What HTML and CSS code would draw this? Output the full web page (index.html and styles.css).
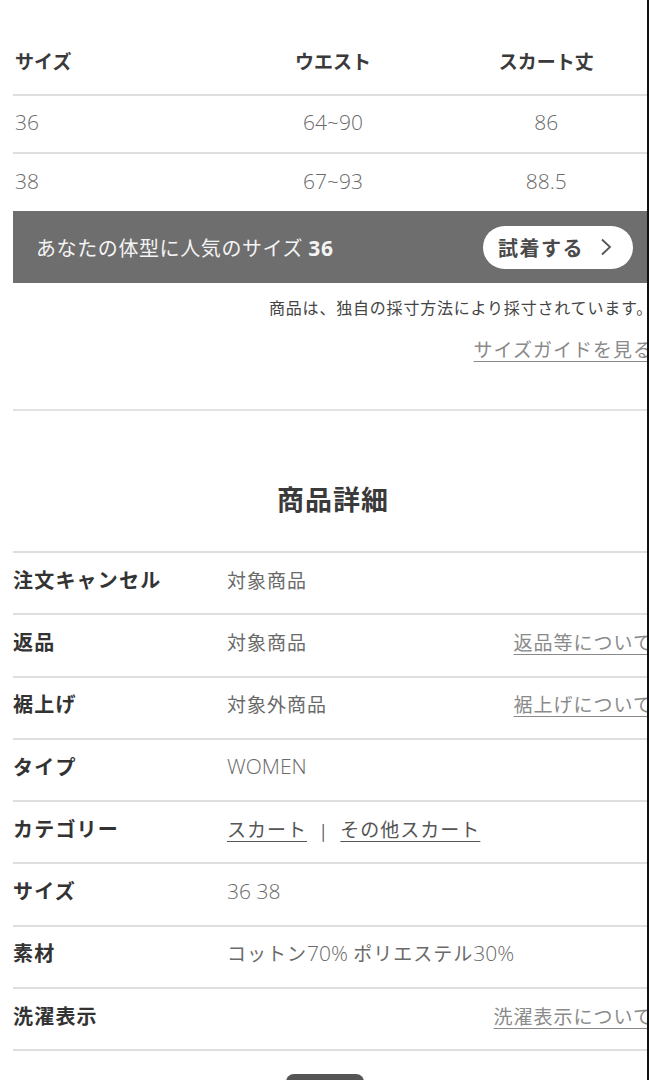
FILE: index.html
```html
<!DOCTYPE html>
<html lang="ja">
<head>
<meta charset="utf-8">
<title>商品詳細</title>
<link rel="stylesheet" href="styles.css">
</head>
<body>
<div class="frame">
  <div class="content">
    <div class="size-table">
      <div class="st-row st-head">
        <span class="st-cell st-first">サイズ</span>
        <span class="st-cell">ウエスト</span>
        <span class="st-cell">スカート丈</span>
      </div>
      <div class="st-row">
        <span class="st-cell st-first">36</span>
        <span class="st-cell">64~90</span>
        <span class="st-cell">86</span>
      </div>
      <div class="st-row">
        <span class="st-cell st-first">38</span>
        <span class="st-cell">67~93</span>
        <span class="st-cell">88.5</span>
      </div>
    </div>

    <div class="banner">
      <span class="banner-text">あなたの体型に人気のサイズ <b>36</b></span>
      <a class="try-btn" href="#">試着する
        <svg class="chev" width="12" height="18" viewBox="0 0 12 18"><path d="M2 1.5 L10 9 L2 16.5" fill="none" stroke="#555" stroke-width="1.8"/></svg>
      </a>
    </div>

    <p class="note">商品は、独自の採寸方法により採寸されています。</p>
    <p class="guide"><a href="#">サイズガイドを見る</a></p>

    <div class="divider"></div>

    <h2 class="section-title">商品詳細</h2>

    <div class="details">
      <div class="d-row"><span class="d-label">注文キャンセル</span><span class="d-value">対象商品</span></div>
      <div class="d-row"><span class="d-label">返品</span><span class="d-value">対象商品</span><a class="d-link" href="#">返品等について</a></div>
      <div class="d-row"><span class="d-label">裾上げ</span><span class="d-value">対象外商品</span><a class="d-link" href="#">裾上げについて</a></div>
      <div class="d-row"><span class="d-label">タイプ</span><span class="d-value latin">WOMEN</span></div>
      <div class="d-row"><span class="d-label">カテゴリー</span><span class="d-value"><a class="cat-link" href="#">スカート</a><span class="sep">|</span><a class="cat-link" href="#">その他スカート</a></span></div>
      <div class="d-row"><span class="d-label">サイズ</span><span class="d-value latin">36 38</span></div>
      <div class="d-row"><span class="d-label">素材</span><span class="d-value">コットン<span class="latin">70%</span> ポリエステル<span class="latin">30%</span></span></div>
      <div class="d-row"><span class="d-label">洗濯表示</span><a class="d-link" href="#">洗濯表示について</a></div>
    </div>

    <div class="more-btn"></div>
  </div>
</div>
</body>
</html>
```

FILE: styles.css
```css
* { box-sizing: border-box; }

html, body {
  margin: 0;
  padding: 0;
  background: #fff;
}

body {
  font-family: "Noto Sans CJK JP", "Noto Sans", sans-serif;
  color: #333;
}

.frame {
  width: 649px;
  height: 1080px;
  overflow: hidden;
  border-right: 2px solid #111;
}

.content {
  width: 640px;
  margin-left: 13px;
  padding-top: 32px;
}

/* size table */
.size-table {
  display: flex;
  flex-direction: column;
}

.st-row {
  display: grid;
  grid-template-columns: repeat(3, 1fr);
  align-items: center;
  height: 58px;
  padding-bottom: 4px;
  border-top: 2px solid #dedede;
}

.st-row:last-child {
  height: 59px;
}

.st-head {
  height: 62px;
  padding-bottom: 5px;
  border-top: none;
  font-weight: 700;
  font-size: 19px;
  color: #3a3a3a;
}

.st-cell {
  text-align: center;
}

.st-row:not(.st-head) .st-cell {
  font-family: "Open Sans", "Noto Sans CJK JP", sans-serif;
  font-weight: 300;
  font-size: 21px;
  color: #6a6a6a;
}

.st-first {
  text-align: left;
  padding-left: 2px;
}

/* banner */
.banner {
  display: flex;
  align-items: center;
  height: 72px;
  background: #6e6e6e;
  padding-left: 23px;
  padding-right: 20px;
}

.banner-text {
  color: #f4f4f4;
  font-size: 20px;
  letter-spacing: 0.6px;
}

.banner-text b {
  font-family: "Open Sans", sans-serif;
  font-weight: 700;
  font-size: 21px;
}

.try-btn {
  margin-left: auto;
  display: flex;
  align-items: center;
  gap: 16px;
  width: 150px;
  height: 43px;
  padding-left: 15px;
  background: #fff;
  border-radius: 22px;
  color: #4a4a4a;
  font-weight: 700;
  font-size: 20px;
  letter-spacing: 1.5px;
  text-decoration: none;
}

.chev { display: block; }

/* notes */
.note {
  margin: 12px 0 0;
  text-align: right;
  font-size: 16px;
  line-height: 24px;
  color: #444;
  letter-spacing: 0.8px;
}

.guide {
  margin: 16px 0 0;
  text-align: right;
  font-size: 19px;
  line-height: 28px;
  letter-spacing: 1px;
}

.guide a {
  color: #8a8a8a;
  text-decoration: underline;
  text-underline-offset: 4px;
}

.divider {
  margin-top: 46px;
  height: 2px;
  background: #e2e2e2;
}

.section-title {
  margin: 68px 0 0;
  text-align: center;
  font-size: 27px;
  line-height: 40px;
  font-weight: 700;
  color: #3a3a3a;
  letter-spacing: 1px;
}

/* details */
.details {
  margin-top: 32px;
  border-bottom: 2px solid #dedede;
}

.d-row {
  display: flex;
  align-items: center;
  height: 62.3px;
  padding-bottom: 8px;
  border-top: 2px solid #dedede;
}

.d-label {
  width: 214px;
  flex: none;
  font-weight: 700;
  font-size: 20px;
  letter-spacing: 1.2px;
  color: #333;
}

.d-value {
  font-size: 19px;
  letter-spacing: 1px;
  color: #6a6a6a;
}

.latin {
  font-family: "Open Sans", "Noto Sans CJK JP", sans-serif;
  font-weight: 300;
  font-size: 21px;
  letter-spacing: 0;
}

.d-value .latin { font-size: 21px; }

.d-link {
  margin-left: auto;
  font-size: 19px;
  letter-spacing: 1px;
  color: #8a8a8a;
  text-decoration: underline;
  text-underline-offset: 4px;
}

.cat-link {
  color: #555;
  text-decoration: underline;
  text-underline-offset: 4px;
}

.sep {
  display: inline-block;
  margin: 0 14px;
  color: #444;
  font-size: 16px;
}

.more-btn {
  margin: 23px 0 0 273px;
  width: 78px;
  height: 40px;
  background: #555;
  border-radius: 8px;
}
```
